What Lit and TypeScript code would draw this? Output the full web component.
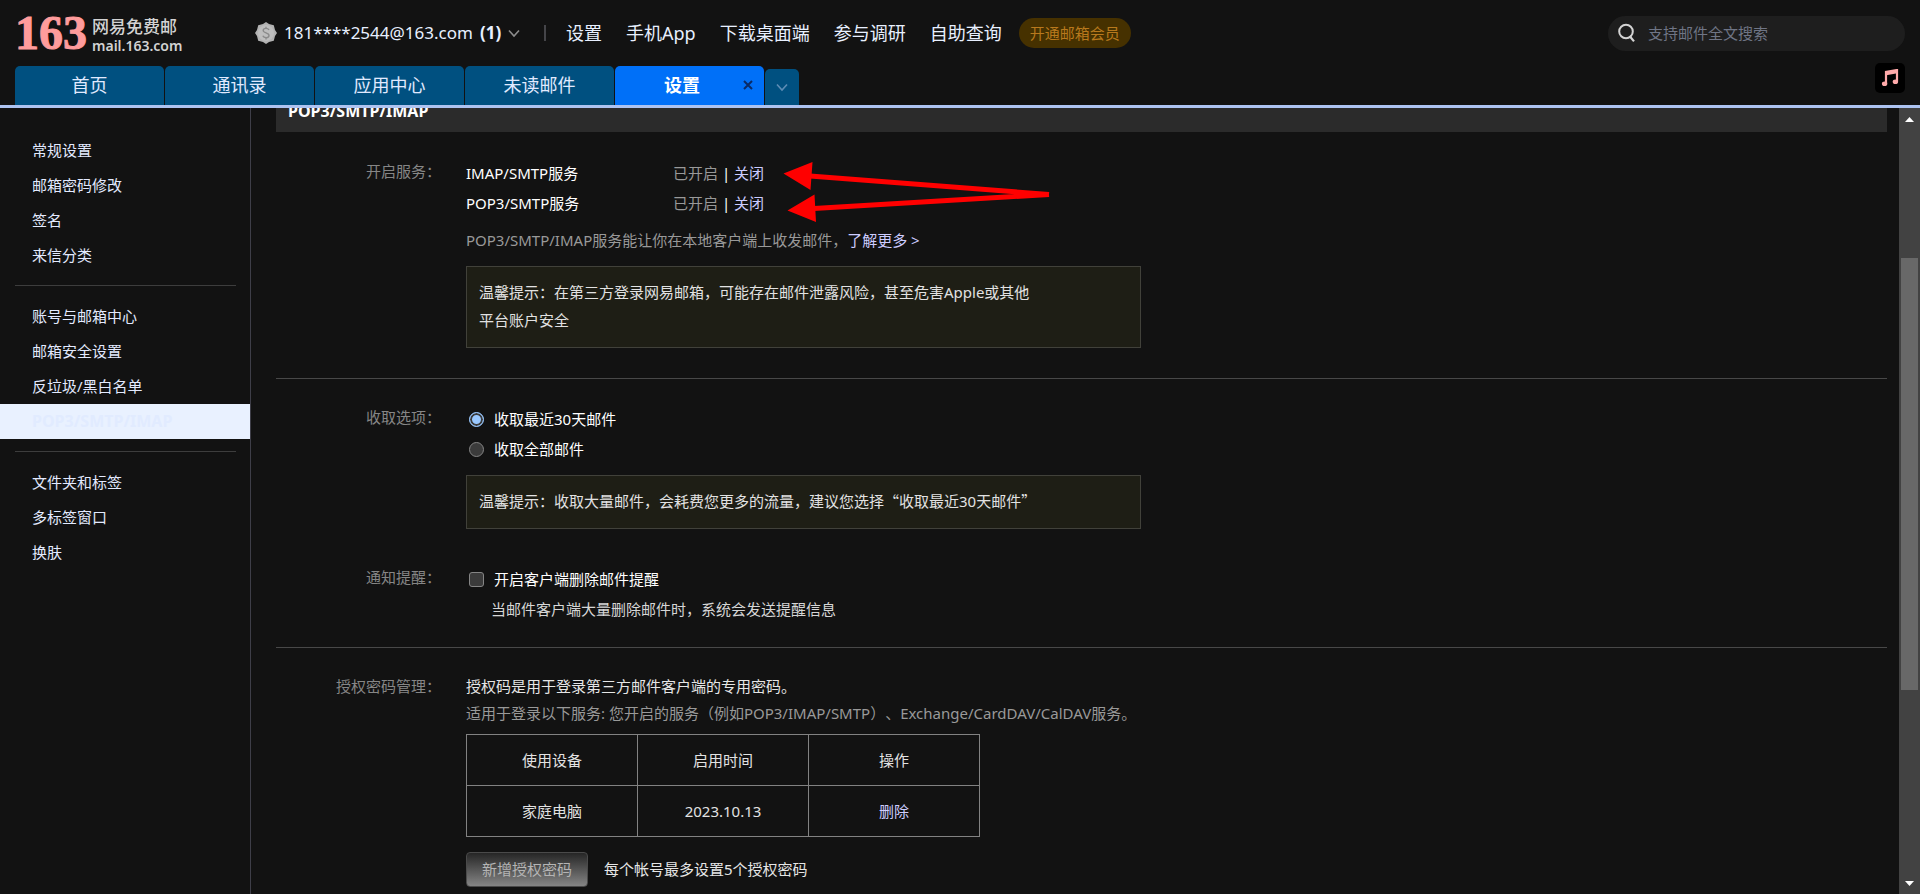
import { LitElement, html, css, svg } from "lit";
import { customElement, state } from "lit/decorators.js";
import { classMap } from "lit/directives/class-map.js";

const MENU_GROUPS: string[][] = [
  ["常规设置", "邮箱密码修改", "签名", "来信分类"],
  ["账号与邮箱中心", "邮箱安全设置", "反垃圾/黑白名单", "POP3/SMTP/IMAP"],
  ["文件夹和标签", "多标签窗口", "换肤"],
];

const chevron = svg`<path d="M1 1.5 L6 7 L11 1.5" fill="none" stroke="currentColor" stroke-width="1.6" />`;

@customElement("mail-header")
class MailHeader extends LitElement {
  static styles = css`
    :host {
      display: block;
      border-bottom: 3px solid #adc3f1;
    }
    a {
      color: inherit;
      text-decoration: none;
    }
    button {
      font: inherit;
      color: inherit;
      border: 0;
      padding: 0;
      background: none;
      cursor: pointer;
    }
    .top {
      display: flex;
      align-items: center;
      height: 66px;
      padding: 0 15px;
      font-size: 18px;
      line-height: 24px;
      color: #e8f0ff;
      white-space: nowrap;
    }
    .logo {
      display: flex;
      align-items: center;
      gap: 5px;
      width: 240px;
      flex: none;
    }
    .logo-number {
      font-family: "Liberation Serif", serif;
      font-weight: bold;
      font-size: 48px;
      line-height: 50px;
      color: #ff9c9c;
      -webkit-text-stroke: 1px #ff9c9c;
    }
    .logo-words {
      display: flex;
      flex-direction: column;
      padding-top: 6px;
      color: #d2d2d2;
    }
    .logo-name {
      font-size: 17px;
      line-height: 20px;
      font-weight: 500;
    }
    .logo-domain {
      font-size: 14px;
      line-height: 18px;
      font-weight: 600;
    }
    .account {
      display: flex;
      align-items: center;
      gap: 7px;
      width: 289px;
      flex: none;
      height: 36px;
      font-size: 17px;
    }
    .account svg {
      flex: none;
    }
    .unread {
      font-weight: bold;
    }
    .down {
      color: #8c8c8c;
    }
    .bar {
      width: 2px;
      height: 16px;
      background: #454549;
    }
    .nav {
      display: flex;
      align-items: center;
      gap: 24px;
      margin-left: 20px;
    }
    .vip {
      margin-left: 17px;
      height: 30px;
      padding: 0 11px;
      border-radius: 15px;
      background: #463100;
      color: #b8791d;
      font-size: 15px;
      line-height: 30px;
    }
    .search {
      display: flex;
      align-items: center;
      gap: 12px;
      box-sizing: border-box;
      width: 297px;
      height: 35px;
      margin-left: auto;
      padding: 0 10px;
      border-radius: 18px;
      background: #1e1e1e;
    }
    .search input {
      flex: 1;
      min-width: 0;
      border: 0;
      padding: 0;
      outline: 0;
      background: none;
      color: #e8f0ff;
      font: inherit;
      font-size: 15px;
    }
    .search input::placeholder {
      color: #6f7585;
      opacity: 1;
    }
    .tabs {
      display: flex;
      align-items: flex-end;
      gap: 1px;
      height: 39px;
      padding: 0 15px;
      font-size: 18px;
      line-height: 39px;
      color: #e0eaff;
    }
    .tab {
      position: relative;
      box-sizing: border-box;
      width: 149px;
      height: 39px;
      text-align: center;
      border-radius: 5px 5px 0 0;
      background: #005080;
    }
    .tab.active {
      padding-right: 15px;
      background: #0070f8;
      font-weight: bold;
      color: #ffffff;
    }
    .close {
      position: absolute;
      top: 13px;
      right: 10px;
      display: flex;
      color: #0a2a66;
    }
    .more {
      display: flex;
      align-items: center;
      justify-content: center;
      width: 34px;
      height: 36px;
      border-radius: 5px 5px 0 0;
      background: #005080;
      color: #5d8db5;
    }
    .music {
      display: flex;
      align-items: center;
      justify-content: center;
      align-self: flex-start;
      width: 30px;
      height: 30px;
      margin-left: auto;
      margin-top: -3px;
      border-radius: 5px;
      background: #000000;
    }
  `;

  render() {
    return html`
      <div class="top">
        <a class="logo" href="#">
          <span class="logo-number">163</span>
          <span class="logo-words">
            <span class="logo-name">网易免费邮</span>
            <span class="logo-domain">mail.163.com</span>
          </span>
        </a>
        <button class="account">
          <svg width="22" height="22" viewBox="0 0 22 22">
            <path d="M11 0 L14 2 L18.8 3.2 L20 8 L22 11 L20 14 L18.8 18.8 L14 20 L11 22 L8 20 L3.2 18.8 L2 14 L0 11 L2 8 L3.2 3.2 L8 2 Z" fill="#b2b2b2" />
            <circle cx="11" cy="11" r="8" fill="#bebebe" />
            <path d="M14 8 C13 5.8 8.4 5.8 8.2 8.4 C8 11.4 14 10.4 14 13.4 C14 16.2 9 16.4 7.8 13.8 M11 4.8 V6.5 M11 15.5 V17.4" fill="none" stroke="#8b8b8b" stroke-width="1.4" />
          </svg>
          <span>181****2544@163.com</span>
          <span class="unread">(1)</span>
          <svg class="down" width="12" height="9" viewBox="0 0 12 9">${chevron}</svg>
        </button>
        <span class="bar"></span>
        <nav class="nav">
          <a href="#">设置</a>
          <a href="#">手机App</a>
          <a href="#">下载桌面端</a>
          <a href="#">参与调研</a>
          <a href="#">自助查询</a>
        </nav>
        <button class="vip">开通邮箱会员</button>
        <label class="search">
          <svg width="18" height="20" viewBox="0 0 18 20">
            <circle cx="8" cy="8.5" r="6.8" fill="none" stroke="#d4d4d4" stroke-width="2" />
            <path d="M11.6 13 L16 18.4" stroke="#d4d4d4" stroke-width="2.2" />
          </svg>
          <input type="search" placeholder="支持邮件全文搜索" aria-label="支持邮件全文搜索" />
        </label>
      </div>
      <div class="tabs">
        <a class="tab" href="#">首页</a>
        <a class="tab" href="#">通讯录</a>
        <a class="tab" href="#">应用中心</a>
        <a class="tab" href="#">未读邮件</a>
        <div class="tab active">
          设置
          <button class="close" aria-label="关闭标签">
            <svg width="12" height="12" viewBox="0 0 12 12">
              <path d="M2 2 L10 10 M10 2 L2 10" stroke="currentColor" stroke-width="2" />
            </svg>
          </button>
        </div>
        <button class="more" aria-label="更多标签">
          <svg width="12" height="9" viewBox="0 0 12 9">${chevron}</svg>
        </button>
        <button class="music" aria-label="音乐">
          <svg width="18" height="18" viewBox="0 0 18 18">
            <path d="M5 14.6 V3 L16 1 V12.6" fill="none" stroke="#ffaaaa" stroke-width="2.2" />
            <path d="M5 4.6 L16 2.6" stroke="#ffaaaa" stroke-width="3.6" />
            <ellipse cx="3.6" cy="14.8" rx="2.7" ry="2.3" fill="#ffaaaa" />
            <ellipse cx="14.4" cy="12.8" rx="2.7" ry="2.3" fill="#ffaaaa" />
          </svg>
        </button>
      </div>
    `;
  }
}

@customElement("settings-menu")
class SettingsMenu extends LitElement {
  @state() private current = "POP3/SMTP/IMAP";

  static styles = css`
    :host {
      display: block;
      box-sizing: border-box;
      flex: none;
      width: 251px;
      padding-top: 25px;
      border-right: 1px solid #3e3e48;
      color: #e3eaff;
    }
    .group {
      list-style: none;
      margin: 0;
      padding: 0;
    }
    .rule {
      margin: 12px 14px 13px 15px;
      border: 0;
      border-top: 1px solid #3d3d3d;
    }
    .item {
      display: block;
      padding-left: 32px;
      line-height: 35px;
      color: inherit;
      text-decoration: none;
    }
    .item.active {
      background: #e9f1ff;
      color: #e1ebff;
      font-size: 16px;
      font-weight: bold;
    }
  `;

  render() {
    return html`${MENU_GROUPS.map(
      (group, i) => html`
        ${i > 0 ? html`<hr class="rule" />` : ""}
        <ul class="group">
          ${group.map(
            (name) => html`<li>
              <a class=${classMap({ item: true, active: name === this.current })} href="#" @click=${() => (this.current = name)}>${name}</a>
            </li>`
          )}
        </ul>
      `
    )}`;
  }
}

@customElement("scroll-track")
class ScrollTrack extends LitElement {
  static styles = css`
    :host {
      display: grid;
      grid-template-rows: 18px 132fr 432fr 186fr 18px;
      flex: none;
      width: 21px;
      justify-items: center;
      background: #424242;
    }
    .thumb {
      grid-row: 3;
      width: 17px;
      background: #686868;
    }
    .up {
      grid-row: 1;
      align-self: end;
      margin-bottom: 4px;
    }
    .down {
      grid-row: 5;
      align-self: start;
      margin-top: 5px;
    }
  `;

  render() {
    return html`
      <svg class="up" width="9" height="5" viewBox="0 0 9 5"><path d="M0 5 L4.5 0 L9 5 Z" fill="#ffffff" /></svg>
      <div class="thumb"></div>
      <svg class="down" width="9" height="5" viewBox="0 0 9 5"><path d="M0 0 L4.5 5 L9 0 Z" fill="#ffffff" /></svg>
    `;
  }
}

@customElement("protocol-settings")
class ProtocolSettings extends LitElement {
  static styles = css`
    :host {
      display: block;
      flex: 1;
      min-width: 0;
      overflow: hidden;
      padding: 0 12px 0 25px;
      color: #ffffff;
    }
    a {
      color: #cdccff;
      text-decoration: none;
    }
    p,
    h2 {
      margin: 0;
    }
    .title {
      height: 40px;
      margin: -16px 0 1px;
      padding-left: 12px;
      background: #2b2b2b;
      font-size: 16px;
      line-height: 38px;
    }
    .section {
      padding: 25px 0 30px;
    }
    .section + .section {
      border-top: 1px solid #484848;
    }
    .section.options {
      padding-bottom: 23px;
    }
    .row {
      display: grid;
      grid-template-columns: 165px minmax(0, 1fr);
      column-gap: 25px;
      line-height: 30px;
    }
    .row + .row {
      margin-top: 35px;
    }
    .name {
      color: #868686;
      text-align: right;
      line-height: 26px;
    }
    .body {
      position: relative;
    }
    .service {
      display: grid;
      grid-template-columns: 207px auto;
      justify-content: start;
    }
    .muted {
      color: #999999;
    }
    .about {
      margin-top: 7px;
    }
    .tip {
      box-sizing: border-box;
      max-width: 675px;
      margin-top: 11px;
      padding: 11px 12px 13px;
      border: 1px solid #41413a;
      background: #1e1e15;
      color: #e2e2e2;
      line-height: 28px;
    }
    .cjk {
      font-family: "Noto Sans CJK SC", sans-serif;
    }
    .choice {
      display: flex;
      align-items: center;
      gap: 10px;
      width: max-content;
      padding-left: 3px;
    }
    .choice input {
      appearance: none;
      box-sizing: border-box;
      width: 15px;
      height: 15px;
      margin: 0;
      border: 1px solid #858585;
      background: #3b3b3b;
    }
    .choice input[type="radio"] {
      border-radius: 50%;
    }
    .choice input[type="checkbox"] {
      border-radius: 3px;
    }
    .choice input[type="radio"]:checked {
      border: 1px solid #99c8ff;
      background: #99c8ff;
      box-shadow: inset 0 0 0 2px #3b3b3b;
    }
    .detail {
      padding-left: 25px;
      color: #d6d6d6;
    }
    .codes {
      line-height: 27px;
    }
    .devices {
      width: 514px;
      margin: 7px 0 15px;
      border-collapse: collapse;
      table-layout: fixed;
      color: #e2e2e2;
    }
    .devices th,
    .devices td {
      height: 50px;
      padding: 0;
      border: 1px solid #828282;
      font-weight: normal;
      text-align: center;
    }
    .add {
      display: flex;
      align-items: center;
      gap: 16px;
    }
    .add button {
      height: 35px;
      padding: 0 15px;
      border: 1px solid #4a4a4a;
      border-radius: 4px;
      background: linear-gradient(#262626, #858585);
      color: #b4b4b4;
      font: inherit;
    }
    .bright {
      color: #e6e6e6;
    }
    .arrows {
      position: absolute;
      left: 316px;
      top: 1px;
      pointer-events: none;
    }
  `;

  render() {
    return html`
      <h2 class="title">POP3/SMTP/IMAP</h2>
      <section class="section">
        <div class="row">
          <span class="name">开启服务：</span>
          <div class="body">
            <div class="service">
              <span>IMAP/SMTP服务</span>
              <span><span class="muted">已开启</span> | <a href="#">关闭</a></span>
            </div>
            <div class="service">
              <span>POP3/SMTP服务</span>
              <span><span class="muted">已开启</span> | <a href="#">关闭</a></span>
            </div>
            <p class="about muted">POP3/SMTP/IMAP服务能让你在本地客户端上收发邮件，<a href="#">了解更多 &gt;</a></p>
            <p class="tip">温馨提示：在第三方登录网易邮箱，可能存在邮件泄露风险，甚至危害Apple或其他<br />平台账户安全</p>
            <svg class="arrows" width="270" height="66" viewBox="0 0 270 66">
              <path d="M28 17 L267 35.5 M32 49.5 L267 35.5" stroke="#ff0000" stroke-width="5" />
              <path d="M1.5 14.5 L30.5 3 L28.5 31 Z M5.5 51.5 L32.5 35.5 L34 63 Z" fill="#ff0000" />
            </svg>
          </div>
        </div>
      </section>
      <section class="section options">
        <div class="row">
          <span class="name">收取选项：</span>
          <div>
            <label class="choice"><input type="radio" name="range" checked />收取最近30天邮件</label>
            <label class="choice"><input type="radio" name="range" />收取全部邮件</label>
            <p class="tip">温馨提示：收取大量邮件，会耗费您更多的流量，建议您选择<span class="cjk">“</span>收取最近30天邮件<span class="cjk">”</span></p>
          </div>
        </div>
        <div class="row">
          <span class="name">通知提醒：</span>
          <div>
            <label class="choice"><input type="checkbox" />开启客户端删除邮件提醒</label>
            <p class="detail">当邮件客户端大量删除邮件时，系统会发送提醒信息</p>
          </div>
        </div>
      </section>
      <section class="section">
        <div class="row">
          <span class="name">授权密码管理：</span>
          <div class="codes">
            <p class="bright">授权码是用于登录第三方邮件客户端的专用密码。</p>
            <p class="muted">适用于登录以下服务: 您开启的服务（例如POP3/IMAP/SMTP）、Exchange/CardDAV/CalDAV服务。</p>
            <table class="devices">
              <thead>
                <tr><th>使用设备</th><th>启用时间</th><th>操作</th></tr>
              </thead>
              <tbody>
                <tr><td>家庭电脑</td><td>2023.10.13</td><td><a href="#">删除</a></td></tr>
              </tbody>
            </table>
            <div class="add">
              <button>新增授权密码</button>
              <span class="bright">每个帐号最多设置5个授权密码</span>
            </div>
          </div>
        </div>
      </section>
    `;
  }
}

@customElement("app-root")
class AppRoot extends LitElement {
  static styles = css`
    :host {
      display: flex;
      flex-direction: column;
      height: 100vh;
      overflow: hidden;
      background: #121212;
      font-family: "Noto Sans", "Noto Sans CJK SC", sans-serif;
      font-size: 15px;
      text-spacing-trim: space-all;
    }
    .page {
      display: flex;
      flex: 1;
      min-height: 0;
    }
  `;

  render() {
    return html`
      <mail-header></mail-header>
      <div class="page">
        <settings-menu></settings-menu>
        <protocol-settings></protocol-settings>
        <scroll-track></scroll-track>
      </div>
    `;
  }
}
